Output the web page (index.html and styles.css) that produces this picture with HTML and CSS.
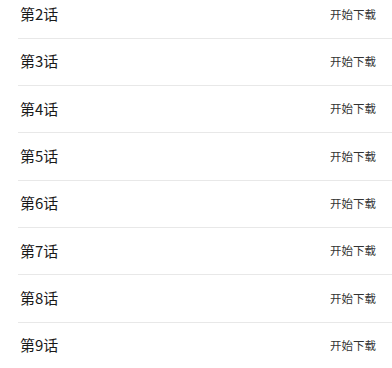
FILE: index.html
```html
<!DOCTYPE html>
<html lang="zh-CN">
<head>
  <meta charset="UTF-8">
  <meta name="viewport" content="width=device-width, initial-scale=1.0">
  <title>下载列表</title>
  <link rel="stylesheet" href="styles.css">
</head>
<body>
  <!-- Chapter list -->
  <ul class="chapter-list">
    <li class="chapter"><span class="chapter-name">第2话</span><span class="download">开始下载</span></li>
    <li class="chapter"><span class="chapter-name">第3话</span><span class="download">开始下载</span></li>
    <li class="chapter"><span class="chapter-name">第4话</span><span class="download">开始下载</span></li>
    <li class="chapter"><span class="chapter-name">第5话</span><span class="download">开始下载</span></li>
    <li class="chapter"><span class="chapter-name">第6话</span><span class="download">开始下载</span></li>
    <li class="chapter"><span class="chapter-name">第7话</span><span class="download">开始下载</span></li>
    <li class="chapter"><span class="chapter-name">第8话</span><span class="download">开始下载</span></li>
    <li class="chapter"><span class="chapter-name">第9话</span><span class="download">开始下载</span></li>
  </ul>
</body>
</html>
```

FILE: styles.css
```css
body {
  margin: 0;
  background-color: #fff;
  font-family: "Noto Sans CJK SC", "Noto Sans", sans-serif;
  overflow: hidden;
}
.chapter-list {
  list-style: none;
  margin: -8.6px 0 0 18px;
  padding: 0;
}
.chapter {
  display: flex;
  align-items: center;
  justify-content: space-between;
  box-sizing: content-box;
  height: 44.33px;
  padding: 0 16px 2px 2px;
  border-bottom: 1px solid #e8e8e8;
}
.chapter-name {
  font-size: 15px;
  color: #1a1a1a;
}
.download {
  font-size: 11.5px;
  color: #333;
}
```
